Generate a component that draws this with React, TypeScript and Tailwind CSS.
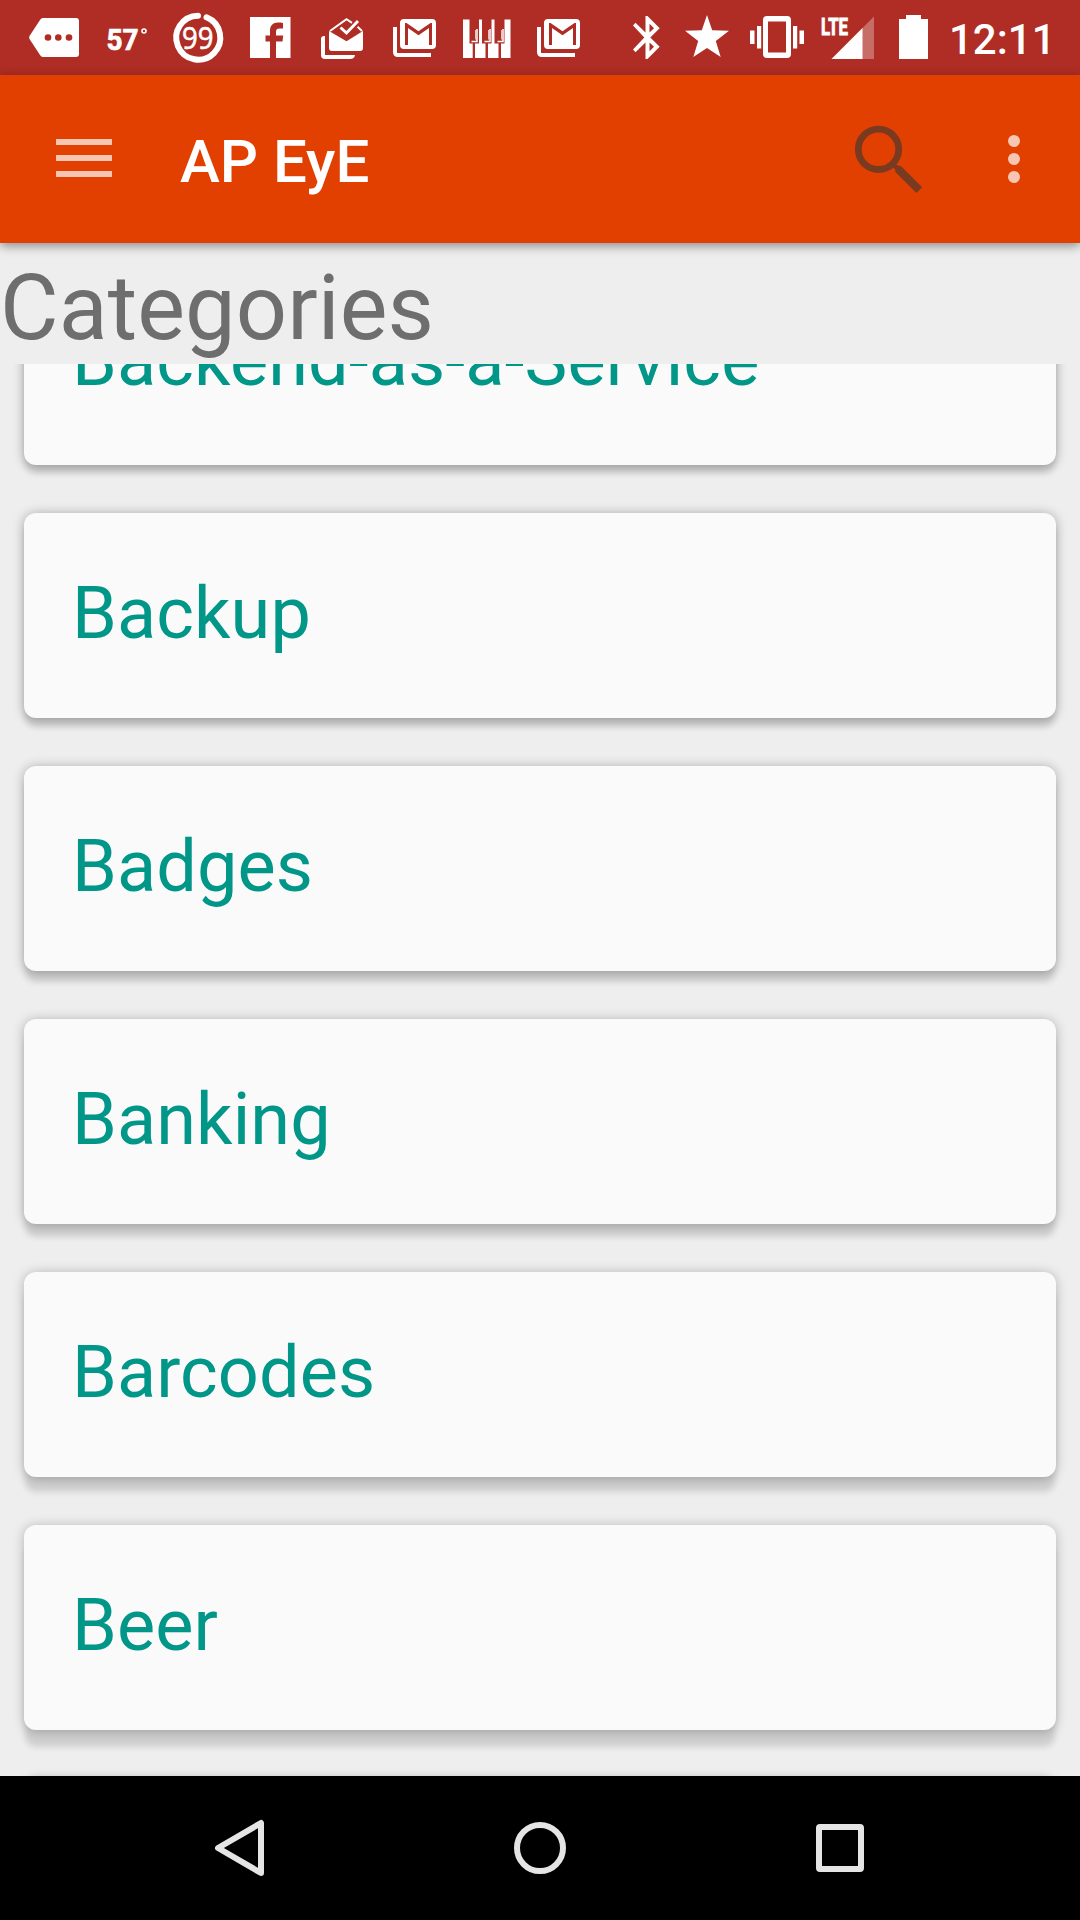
import type { ReactNode } from "react";

/** Status bar glyph: x is the left edge of the glyph in bar coordinates. */
function Glyph({ x, w, className = "", children }: { x: number; w: number; className?: string; children: ReactNode }) {
  return (
    <svg width={w} height={75} viewBox={`${x} 0 ${w} 75`} fill="#fff" className={`shrink-0 overflow-visible ${className}`}>
      {children}
    </svg>
  );
}

function MailStack({ className }: { className: string }) {
  return (
    <Glyph x={393} w={43} className={className}>
      <path d="M393 27H397V53H431V57H398Q393 57 393 52Z" />
      <path
        fillRule="evenodd"
        d="M404 19H432Q436 19 436 23V45Q436 49 432 49H404Q400 49 400 45V23Q400 19 404 19ZM405 23V45H408V28L418.500 35.200L429 28V45H432V23H430.500L418.500 31.300L406.500 23Z"
      />
    </Glyph>
  );
}

function StatusBar() {
  return (
    <div className="flex h-[75px] w-full shrink-0 items-center bg-[#af2d24] pl-[29px] text-white">
      <Glyph x={29} w={50}>
        <path d="M43 18H76Q79 18 79 21V54Q79 57 76 57H43Q41 57 40 55L29.500 39Q28.800 37.500 29.500 36L40 20Q41 18 43 18Z" />
        <g fill="#af2d24">
          <circle cx="48" cy="37.500" r="3.300" />
          <circle cx="58.300" cy="37.500" r="3.300" />
          <circle cx="69" cy="37.500" r="3.300" />
        </g>
      </Glyph>
      <Glyph x={107} w={40} className="ml-[28px]">
        <text x="106.500" y="49.500" fontFamily="Roboto" fontWeight="700" fontSize="29.500" textLength="32" lengthAdjust="spacingAndGlyphs" stroke="#fff" strokeWidth=".7">57</text>
        <circle cx="144" cy="31" r="2" fill="none" stroke="#fff" strokeWidth="1.600" />
      </Glyph>
      <Glyph x={173} w={50} className="ml-[26px]">
        <path d="M206.500 17.300A22 22 0 1 1 198 15.700" fill="none" stroke="#fff" strokeWidth="6" strokeLinecap="round" />
        <text x="182" y="49" fontFamily="Open Sans" fontWeight="400" fontSize="31" textLength="31.500" lengthAdjust="spacingAndGlyphs" stroke="#fff" strokeWidth=".6">99</text>
      </Glyph>
      <Glyph x={250} w={41} className="ml-[27px]">
        <path d="M250 17H290.500V58H276V41.500H282.500L283.200 35.500H276V32C276 29.500 277 28.500 279.500 28.500H283V23C281.500 22.700 280 22.600 278 22.600C273 22.600 270 25.500 270 31V35.500H265.500V41.500H270V58H250Z" />
      </Glyph>
      <Glyph x={321} w={43} className="ml-[30px]">
        <path d="M324 36H325V55H355Q354.500 59 350 59H325Q321 59 321 55V39Q321 36 324 36Z" />
        <path d="M329 31L346.500 41.200L363 31V48Q363 51 360 51H332Q329 51 329 48Z" />
        <path d="M330 31L346.500 19.200L352 22.800M357.500 26.800L362 31" fill="none" stroke="#fff" strokeWidth="2" />
        <path d="M340.500 27.500L346.500 33L358 21" fill="none" stroke="#fff" strokeWidth="3" />
      </Glyph>
      <MailStack className="ml-[29px]" />
      <Glyph x={463} w={48} className="ml-[27px]">
        <path d="M463 19.500H469.500V43.500H472.700V58H463ZM479 19.500H482V43.500H485.500V58H475V43.500H479ZM491.500 19.500H494.500V43.500H498.500V58H488V43.500H491.500ZM504.500 19.500H510.500V58H501V43.500H504.500Z" />
        <g fill="none" stroke="#fff" strokeWidth="1.500">
          <path d="M477 29V41.500H471.500M490 29V41.500H484.500M503 29V41.500H497.500" />
          <path d="M475.500 30V39.500M488.500 30V39.500M501.500 30V39.500" strokeWidth=".7" />
        </g>
      </Glyph>
      <MailStack className="ml-[26px]" />
      <Glyph x={633} w={27} className="ml-[53px]">
        <path fillRule="evenodd" d="M645.500 16H647.500L659.700 28.200L650.300 37.500L659.700 46.800L647.500 59H645.500V42.500L635.500 52.200L633 49.500L644.300 37.500L633 25.500L635.500 22.800L645.500 32.500ZM649.500 23.800V32.500L654 28.200ZM649.500 42.500V51.200L654 46.800Z" />
      </Glyph>
      <Glyph x={685} w={44} className="ml-[25px]">
        <path d="M707 15L712.200 30.200L729 30.800L715.800 41L720.700 57L707 48L693.300 57L698.200 41L685 30.800L701.800 30.200Z" />
      </Glyph>
      <Glyph x={750} w={54} className="ml-[21px]">
        <path fillRule="evenodd" d="M767 16H787Q791 16 791 20V54Q791 58 787 58H767Q763 58 763 54V20Q763 16 767 16ZM768 21.500V52.500H786V21.500Z" />
        <path d="M750 30.500H754.500V44H750ZM757 26H761.200V48.500H757ZM793 26H797.200V48.500H793ZM799.500 30.500H804V44H799.500Z" />
      </Glyph>
      <Glyph x={821} w={53} className="ml-[17px]">
        <text x="821" y="35" fontFamily="Roboto" fontWeight="700" fontSize="24.500" textLength="27" lengthAdjust="spacingAndGlyphs" stroke="#fff" strokeWidth="1">LTE</text>
        <path d="M874 16.500V59H831.500Z" opacity=".3" />
        <path d="M862.500 28V59H831.500Z" />
      </Glyph>
      <Glyph x={899} w={29} className="ml-[25px]">
        <path d="M906 15H921V19H928V59H899V19H906Z" />
      </Glyph>
      <span className="mt-[4px] ml-[21px] text-[42px] leading-[50px] font-medium">12:11</span>
    </div>
  );
}

function Toolbar() {
  return (
    <header className="relative z-10 flex h-[168px] w-full shrink-0 items-center bg-[#e14000] pl-[56px] shadow-[0_3px_10px_rgba(0,0,0,0.42)]">
      <div className="mb-[2px] flex w-[56px] flex-col gap-[10px]">
        <div className="h-[6px] bg-[#f6c6b3]" />
        <div className="h-[6px] bg-[#f6c6b3]" />
        <div className="h-[6px] bg-[#f6c6b3]" />
      </div>
      <h1 className="mt-[5px] ml-[68px] text-[60px] leading-[72px] font-medium text-white">AP EyE</h1>
      <svg width="68" height="68" viewBox="855 125 68 68" className="mr-[85px] ml-auto text-[#7a3a20]" fill="currentColor">
        <circle cx="878.500" cy="149.300" r="20.200" fill="none" stroke="currentColor" strokeWidth="6.800" />
        <path d="M892 167L896 164.500L901.500 166.500L922.200 187.300L916.500 193L895.300 172V169.500Z" />
      </svg>
      <div className="mr-[60px] flex flex-col gap-[6px]">
        <div className="size-[12px] rounded-full bg-[#f6c6b3]" />
        <div className="size-[12px] rounded-full bg-[#f6c6b3]" />
        <div className="size-[12px] rounded-full bg-[#f6c6b3]" />
      </div>
    </header>
  );
}

// The light sits above the screen, so shadows grow longer further down the list.
const categories = [
  { name: "Backend-as-a-Service", shadow: "shadow-[0_1px_12px_rgba(0,0,0,0.32),0_9px_6px_-1px_rgba(0,0,0,0.13)]" },
  { name: "Backup", shadow: "shadow-[0_1px_12px_rgba(0,0,0,0.32),0_10px_6px_-1px_rgba(0,0,0,0.13)]" },
  { name: "Badges", shadow: "shadow-[0_1px_12px_rgba(0,0,0,0.3),0_12px_6px_-1px_rgba(0,0,0,0.13)]" },
  { name: "Banking", shadow: "shadow-[0_1px_12px_rgba(0,0,0,0.28),0_14px_6px_-1px_rgba(0,0,0,0.13)]" },
  { name: "Barcodes", shadow: "shadow-[0_1px_12px_rgba(0,0,0,0.26),0_16px_6px_-1px_rgba(0,0,0,0.13)]" },
  { name: "Beer", shadow: "shadow-[0_1px_12px_rgba(0,0,0,0.25),0_18px_6px_-1px_rgba(0,0,0,0.13)]" },
];

function CategoryList() {
  return (
    <main className="flex min-h-0 flex-1 flex-col justify-start overflow-hidden">
      <div className="-mt-[104px] flex flex-col gap-[48px] px-[24px]">
        {categories.map((category) => (
          <article key={category.name} className={`h-[205px] shrink-0 rounded-[12px] bg-[#fafafa] px-[48px] pt-[58px] ${category.shadow}`}>
            <h3 className="text-[72px] leading-[86px] tracking-[0.1px] text-[#009688]">{category.name}</h3>
          </article>
        ))}
        <div className="h-[205px] shrink-0 rounded-[12px] bg-[#fafafa] shadow-[0_0_10px_rgba(0,0,0,0.28)]" />
      </div>
    </main>
  );
}

function NavigationBar() {
  return (
    <nav className="flex h-[144px] w-full shrink-0 items-center justify-between bg-black px-[210px]">
      <svg width="60" height="60" viewBox="210 1818 60 60" fill="none" stroke="#e5e5e5" strokeWidth="6" strokeLinejoin="round">
        <path d="M218 1848L261 1823V1873Z" />
      </svg>
      <div className="size-[52px] rounded-full border-[6px] border-[#e5e5e5]" />
      <div className="flex w-[60px] justify-center">
        <div className="size-[48px] rounded-[4px] border-[6px] border-[#e5e5e5]" />
      </div>
    </nav>
  );
}

export default function App() {
  return (
    <div className="flex h-[1920px] w-[1080px] flex-col overflow-hidden bg-[#eeeeee] font-['Roboto',sans-serif]">
      <StatusBar />
      <Toolbar />
      <h2 className="h-[121px] shrink-0 pt-[13px] text-[90px] leading-[106px] tracking-[0.1px] text-[#6e6e6e]">Categories</h2>
      <CategoryList />
      <NavigationBar />
    </div>
  );
}
